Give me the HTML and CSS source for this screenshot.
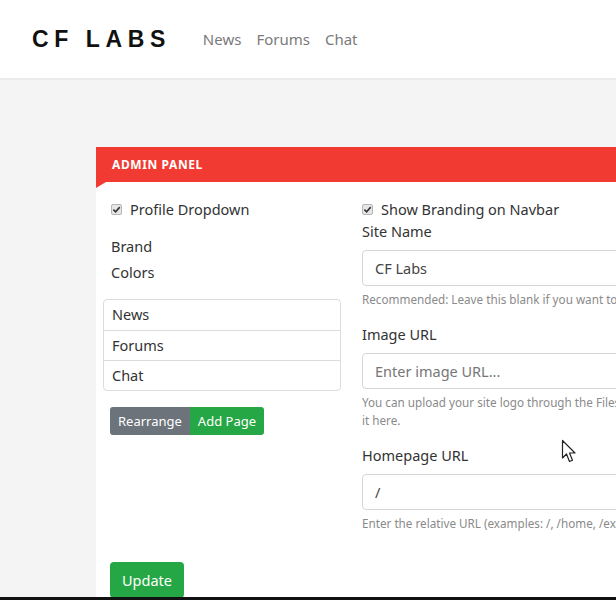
FILE: index.html
```html
<!DOCTYPE html>
<html lang="en">

<head>
    <meta charset="UTF-8">
    <meta name="viewport" content="width=device-width, initial-scale=1.0">
    <title>CF Labs - Admin Panel</title>
    <link rel="stylesheet" href="styles.css">
</head>

<body>

    <header class="navbar">
        <div class="brand">CF LABS</div>
        <nav class="nav-links">
            <a href="#">News</a>
            <a href="#">Forums</a>
            <a href="#">Chat</a>
        </nav>
    </header>

    <main class="main">
        <div class="panel">
            <div class="panel-heading">ADMIN PANEL</div>
            <div class="panel-body">
                <div class="col-left">
                    <label class="check-row">
                        <span class="fake-check">
                            <svg viewBox="0 0 10 10" width="9" height="9"><path d="M1.5 5.2 L4 7.6 L8.6 2.4" fill="none" stroke="#333" stroke-width="1.8"/></svg>
                        </span>
                        Profile Dropdown
                    </label>
                    <div class="plain-label first">Brand</div>
                    <div class="plain-label">Colors</div>

                    <ul class="list-group">
                        <li>News</li>
                        <li>Forums</li>
                        <li>Chat</li>
                    </ul>

                    <div class="btn-group">
                        <button class="btn btn-gray">Rearrange</button>
                        <button class="btn btn-green">Add Page</button>
                    </div>

                    <button class="btn btn-green btn-update">Update</button>
                </div>

                <div class="col-right">
                    <label class="check-row">
                        <span class="fake-check">
                            <svg viewBox="0 0 10 10" width="9" height="9"><path d="M1.5 5.2 L4 7.6 L8.6 2.4" fill="none" stroke="#333" stroke-width="1.8"/></svg>
                        </span>
                        Show Branding on Navbar
                    </label>

                    <div class="field-label">Site Name</div>
                    <input class="text-input" type="text" value="CF Labs">
                    <div class="help">Recommended: Leave this blank if you want to</div>

                    <div class="field-label spaced">Image URL</div>
                    <input class="text-input" type="text" placeholder="Enter image URL...">
                    <div class="help">You can upload your site logo through the Files<br>it here.</div>

                    <div class="field-label spaced last">Homepage URL</div>
                    <input class="text-input" type="text" value="/">
                    <div class="help">Enter the relative URL (examples: /, /home, /ex</div>
                </div>
            </div>
        </div>

        <!-- mouse pointer caught in the recording -->
        <svg class="cursor" width="18" height="26" viewBox="0 0 18 26">
            <path d="M1.5 1.5 L1.5 19 L5.5 15 L8.5 22.5 L11.5 21.2 L8.5 14 L14 14 Z" fill="#fff" stroke="#222" stroke-width="1.2" stroke-linejoin="round"/>
        </svg>
    </main>

    <div class="bottom-bar"></div>

</body>

</html>
```

FILE: styles.css
```css
* {
    box-sizing: border-box;
}

body {
    margin: 0;
    height: 600px;
    display: flex;
    flex-direction: column;
    overflow: hidden;
    background-color: #f4f4f4;
    font-family: "Noto Sans", "Open Sans", sans-serif;
    color: #333;
}

.navbar {
    height: 80px;
    flex-shrink: 0;
    display: flex;
    align-items: center;
    padding-left: 32px;
    background-color: #fff;
    border-bottom: 2px solid #ebebeb;
}

.brand {
    font-family: "Liberation Sans", sans-serif;
    font-weight: bold;
    font-size: 23px;
    letter-spacing: 5.6px;
    color: #111;
    margin-top: 1px;
}

.nav-links {
    display: flex;
    gap: 15px;
    margin-left: 32px;
}

.nav-links a {
    color: #7a7a7a;
    text-decoration: none;
    font-size: 15px;
}

.main {
    flex: 1;
    position: relative;
    overflow: hidden;
    padding-top: 67px;
    padding-left: 96px;
}

.panel {
    width: 640px;
    height: 100%;
    background-color: #fff;
}

.panel-heading {
    position: relative;
    height: 35px;
    line-height: 35px;
    padding-left: 16px;
    background-color: #f13b32;
    color: #fff;
    font-size: 12px;
    font-weight: bold;
    letter-spacing: 0.6px;
}

.panel-heading::after {
    content: "";
    position: absolute;
    left: 0;
    top: 35px;
    border-top: 6px solid #f13b32;
    border-right: 10px solid transparent;
}

.panel-body {
    display: flex;
    padding-top: 16px;
}

.col-left {
    width: 252px;
    flex-shrink: 0;
    padding: 0 7px;
}

.col-right {
    flex: 1;
    min-width: 0;
    padding-left: 14px;
}

.check-row {
    display: flex;
    align-items: center;
    height: 22px;
    font-size: 14.5px;
    color: #333;
}

.col-left .check-row {
    padding-left: 8px;
}

.fake-check {
    width: 11px;
    height: 11px;
    margin-right: 8px;
    border: 1px solid #b5b5b5;
    border-radius: 2px;
    background-color: #e6e6e6;
    display: flex;
    align-items: center;
    justify-content: center;
}

.plain-label {
    padding-left: 8px;
    font-size: 14.5px;
    line-height: 26px;
}

.plain-label.first {
    margin-top: 13px;
}

.list-group {
    list-style: none;
    margin: 14px 0 0 0;
    padding: 0;
    border: 1px solid #dcdcdc;
    border-radius: 4px;
}

.list-group li {
    height: 30px;
    line-height: 28px;
    padding-left: 8px;
    font-size: 14.5px;
    border-top: 1px solid #dcdcdc;
}

.list-group li:first-child {
    border-top: none;
}

.btn-group {
    display: flex;
    margin: 16px 0 0 7px;
}

.btn {
    border: none;
    color: #fff;
    font-family: "Noto Sans", "Open Sans", sans-serif;
    cursor: pointer;
}

.btn-group .btn {
    height: 28px;
    font-size: 13px;
    padding: 0 8px;
}

.btn-gray {
    background-color: #6c737b;
    border-radius: 3px 0 0 3px;
}

.btn-group .btn-green {
    border-radius: 0 3px 3px 0;
}

.btn-green {
    background-color: #26a745;
}

.btn-update {
    display: block;
    margin: 127px 0 0 7px;
    height: 36px;
    padding: 0 12px;
    font-size: 14.5px;
    border-radius: 4px;
}

.field-label {
    font-size: 14.5px;
    line-height: 22px;
}

.field-label.spaced {
    margin-top: 15px;
}

.field-label.last {
    margin-top: 15px;
}

.text-input {
    display: block;
    width: 100%;
    height: 36px;
    margin-top: 8px;
    padding: 0 12px;
    border: 1px solid #d6d6d6;
    border-radius: 4px;
    font-family: "Noto Sans", "Open Sans", sans-serif;
    font-size: 14.5px;
    color: #444;
}

.text-input::placeholder {
    color: #777;
}

.help {
    margin-top: 4px;
    font-size: 11.7px;
    line-height: 18px;
    color: #8a8a8a;
    white-space: nowrap;
}

.cursor {
    position: absolute;
    left: 561px;
    top: 359px;
}

.bottom-bar {
    height: 3px;
    flex-shrink: 0;
    background-color: #111;
}
```
